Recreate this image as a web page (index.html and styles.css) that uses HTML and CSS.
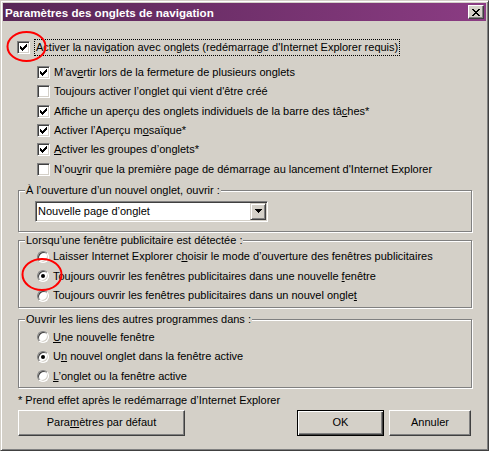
FILE: index.html
```html
<!DOCTYPE html>
<html lang="fr">
<head>
<meta charset="utf-8">
<title>Paramètres des onglets de navigation</title>
<link rel="stylesheet" href="styles.css">
</head>
<body>
<div class="window">
  <div class="titlebar">
    <span class="title">Paramètres des onglets de navigation</span>
    <span class="close"><svg width="8" height="7" viewBox="0 0 8 7" shape-rendering="crispEdges"><path d="M0 0h2v1H0zM6 0h2v1H6zM1 1h2v1H1zM5 1h2v1H5zM2 2h4v1H2zM3 3h2v1H3zM2 4h4v1H2zM1 5h2v1H1zM5 5h2v1H5zM0 6h2v1H0zM6 6h2v1H6z"/></svg></span>
  </div>
  <div class="content">
    <div class="row main">
      <span class="cb"><svg width="7" height="7" viewBox="0 0 7 7" shape-rendering="crispEdges"><path d="M6 0h1v1H6zM5 1h2v1H5zM0 2h1v1H0zM4 2h3v1H4zM0 3h2v1H0zM3 3h3v1H3zM0 4h5v1H0zM1 5h3v1H1zM2 6h1v1H2z"/></svg></span>
      <span class="focus">Activer la navigation avec onglets (redémarrage d'Internet Explorer requis)</span>
    </div>
    <div class="subs">
      <div class="row">
        <span class="cb"><svg width="7" height="7" viewBox="0 0 7 7" shape-rendering="crispEdges"><path d="M6 0h1v1H6zM5 1h2v1H5zM0 2h1v1H0zM4 2h3v1H4zM0 3h2v1H0zM3 3h3v1H3zM0 4h5v1H0zM1 5h3v1H1zM2 6h1v1H2z"/></svg></span>
        <span class="label">M’av<u>e</u>rtir lors de la fermeture de plusieurs onglets</span>
      </div>
      <div class="row">
        <span class="cb"></span>
        <span class="label">Toujours activer l’onglet qui vient d'être créé</span>
      </div>
      <div class="row">
        <span class="cb"><svg width="7" height="7" viewBox="0 0 7 7" shape-rendering="crispEdges"><path d="M6 0h1v1H6zM5 1h2v1H5zM0 2h1v1H0zM4 2h3v1H4zM0 3h2v1H0zM3 3h3v1H3zM0 4h5v1H0zM1 5h3v1H1zM2 6h1v1H2z"/></svg></span>
        <span class="label">Affiche un aperçu des onglets individuels de la barre des tâ<u>c</u>hes*</span>
      </div>
      <div class="row">
        <span class="cb"><svg width="7" height="7" viewBox="0 0 7 7" shape-rendering="crispEdges"><path d="M6 0h1v1H6zM5 1h2v1H5zM0 2h1v1H0zM4 2h3v1H4zM0 3h2v1H0zM3 3h3v1H3zM0 4h5v1H0zM1 5h3v1H1zM2 6h1v1H2z"/></svg></span>
        <span class="label">Activer l’Aperçu m<u>o</u>saïque*</span>
      </div>
      <div class="row">
        <span class="cb"><svg width="7" height="7" viewBox="0 0 7 7" shape-rendering="crispEdges"><path d="M6 0h1v1H6zM5 1h2v1H5zM0 2h1v1H0zM4 2h3v1H4zM0 3h2v1H0zM3 3h3v1H3zM0 4h5v1H0zM1 5h3v1H1zM2 6h1v1H2z"/></svg></span>
        <span class="label"><u>A</u>ctiver les groupes d’onglets*</span>
      </div>
      <div class="row">
        <span class="cb"></span>
        <span class="label">N’ou<u>v</u>rir que la première page de démarrage au lancement d'Internet Explorer</span>
      </div>
    </div>

    <div class="group g1">
      <span class="legend">À l’ouverture d’un nouvel onglet, ouvrir :</span>
      <div class="select">
        <span class="value">Nouvelle page d’onglet</span>
        <span class="arrow"><svg width="7" height="4" viewBox="0 0 7 4" shape-rendering="crispEdges"><path d="M0 0h7v1H0zM1 1h5v1H1zM2 2h3v1H2zM3 3h1v1H3z"/></svg></span>
      </div>
    </div>

    <div class="group g2">
      <span class="legend">Lorsqu’une fenêtre publicitaire est détectée :</span>
      <div class="row"><span class="rb"></span><span class="label">Laisser Internet Explorer c<u>h</u>oisir le mode d’ouverture des fenêtres publicitaires</span></div>
      <div class="row"><span class="rb on"></span><span class="label">Toujours ouvrir les fenêtres publicitaires dans une nouvelle <u>f</u>enêtre</span></div>
      <div class="row"><span class="rb"></span><span class="label">Toujours ouvrir les fenêtres publicitaires dans un nouvel ongle<u>t</u></span></div>
    </div>

    <div class="group g3">
      <span class="legend">Ouvrir les liens des autres programmes dans :</span>
      <div class="row"><span class="rb"></span><span class="label"><u>U</u>ne nouvelle fenêtre</span></div>
      <div class="row"><span class="rb on"></span><span class="label">U<u>n</u> nouvel onglet dans la fenêtre active</span></div>
      <div class="row"><span class="rb"></span><span class="label"><u>L</u>’onglet ou la fenêtre active</span></div>
    </div>

    <div class="note">* Prend effet après le redémarrage d’Internet Explorer</div>

    <div class="buttons">
      <span class="btn reset">Para<u>m</u>ètres par défaut</span>
      <span class="spacer"></span>
      <span class="btn ok">OK</span>
      <span class="btn cancel">Annuler</span>
    </div>
  </div>

  <svg class="marks" width="489" height="451" viewBox="0 0 489 451">
    <ellipse cx="26.5" cy="46.5" rx="19" ry="14.5" fill="none" stroke="#f00" stroke-width="2"/>
    <ellipse cx="42" cy="274.5" rx="19.5" ry="15.5" fill="none" stroke="#f00" stroke-width="2"/>
  </svg>
</div>
</body>
</html>
```

FILE: styles.css
```css
* { box-sizing: border-box; }
html, body { margin: 0; padding: 0; background: #d4d0c8; }
body {
  font-family: "Liberation Sans", Arial, sans-serif;
  font-size: 11px;
  color: #000;
}
u { text-decoration: underline; text-underline-offset: 1px; }

.window {
  position: relative;
  width: 489px;
  height: 451px;
  border: 1px solid;
  border-color: #d4d0c8 #404040 #404040 #d4d0c8;
  box-shadow: inset 1px 1px #fff, inset -1px -1px #808080;
  padding: 2px;
  background: #d4d0c8;
  display: flex;
  flex-direction: column;
}

.titlebar {
  height: 18px;
  flex: none;
  display: flex;
  align-items: center;
  justify-content: space-between;
  background: linear-gradient(to right, #582656, #8b3c83);
  padding: 0 2px 0 2px;
}
.title {
  color: #fff;
  font-weight: bold;
  font-size: 11.6px;
  line-height: 13px;
}
.close {
  width: 16px;
  height: 14px;
  display: flex;
  align-items: center;
  justify-content: center;
  background: #d4d0c8;
  border: 1px solid;
  border-color: #fff #404040 #404040 #fff;
  box-shadow: inset -1px -1px #808080;
}

.content {
  flex: 1;
  padding: 17px 14px 0 15px;
  display: flex;
  flex-direction: column;
}

.row {
  display: flex;
  align-items: center;
  height: 19.5px;
  line-height: 13px;
  white-space: nowrap;
}
.row.main { height: 19px; margin-left: -1px; }
.subs { margin-top: 6px; padding-left: 19px; }
.subs .row { height: 19.3px; }

.cb {
  flex: none;
  width: 13px;
  height: 13px;
  border: 1px solid;
  border-color: #808080 #fff #fff #808080;
  box-shadow: inset 1px 1px #404040, inset -1px -1px #d4d0c8;
  background: #fff;
  display: flex;
  align-items: center;
  justify-content: center;
}
.cb svg { display: block; }

.rb {
  flex: none;
  position: relative;
  width: 12px;
  height: 12px;
  border-radius: 50%;
  border: 1px solid;
  border-color: #808080 #fff #fff #808080;
  box-shadow: inset 1px 1px #404040, inset -1px -1px #d4d0c8;
  background: #fff;
}
.rb.on::after {
  content: "";
  position: absolute;
  left: 3px;
  top: 3px;
  width: 4px;
  height: 4px;
  border-radius: 50%;
  background: #000;
}

.label { margin-left: 4px; }
.focus {
  margin-left: 4px;
  border: 1px dotted #000;
  padding: 1px 1px;
}

.group {
  position: relative;
  width: 454px;
  border: 1px solid #808080;
  box-shadow: inset 1px 1px #fff, 1px 1px #fff;
}
.legend {
  position: absolute;
  left: 6px;
  top: -7px;
  padding: 0 1px;
  background: #d4d0c8;
  line-height: 13px;
  white-space: nowrap;
}
.g1 { margin-top: 11px; padding: 10px 0 9px 16px; }
.g2 { margin-top: 8px; padding: 6px 0 2px 18px; }
.g3 { margin-top: 11px; padding: 7px 0 1px 18px; }

.select {
  width: 233px;
  height: 21px;
  border: 1px solid;
  border-color: #808080 #fff #fff #808080;
  box-shadow: inset 1px 1px #404040, inset -1px -1px #d4d0c8;
  background: #fff;
  display: flex;
  align-items: center;
  padding: 1px;
}
.select .value { flex: 1; padding-left: 1px; line-height: 13px; }
.select .arrow {
  width: 16px;
  height: 17px;
  background: #d4d0c8;
  border: 1px solid;
  border-color: #d4d0c8 #404040 #404040 #d4d0c8;
  box-shadow: inset 1px 1px #fff, inset -1px -1px #808080;
  display: flex;
  align-items: center;
  justify-content: center;
}
.select .arrow svg { display: block; }

.note {
  margin-top: 6px;
  line-height: 13px;
  white-space: nowrap;
}

.buttons {
  margin-top: 3px;
  display: flex;
  padding-right: 1px;
}
.spacer { flex: 1; }
.btn {
  height: 26px;
  display: flex;
  align-items: center;
  justify-content: center;
  border: 1px solid;
  border-color: #fff #404040 #404040 #fff;
  box-shadow: inset -1px -1px #808080;
  background: #d4d0c8;
  line-height: 13px;
}
.reset { width: 167px; }
.ok {
  width: 87px;
  border-color: #000;
  box-shadow: inset 1px 1px #fff, inset -1px -1px #404040, inset -2px -2px #808080;
}
.cancel { width: 82px; margin-left: 5px; }

.marks {
  position: absolute;
  left: -1px;
  top: -1px;
  pointer-events: none;
}
```
